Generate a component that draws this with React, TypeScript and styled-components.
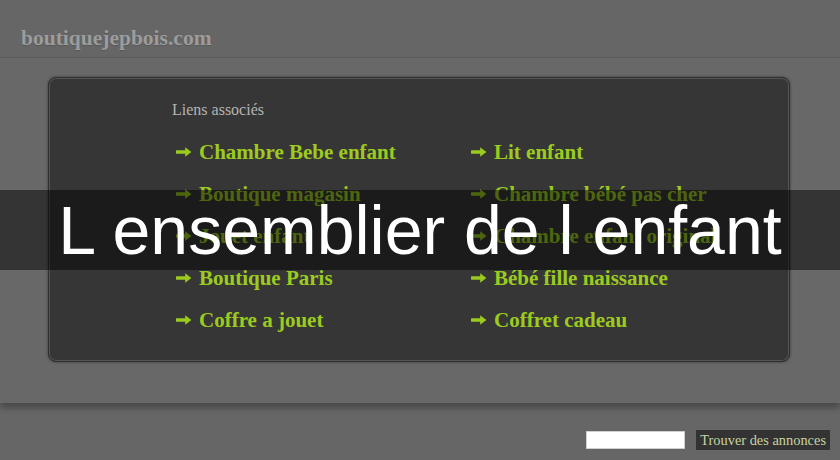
import React from "react";
import styled, { createGlobalStyle } from "styled-components";

const links: string[][] = [
  ["Chambre Bebe enfant", "Lit enfant"],
  ["Boutique magasin", "Chambre bébé pas cher"],
  ["Jouet enfant", "Chambre enfant original"],
  ["Boutique Paris", "Bébé fille naissance"],
  ["Coffre a jouet", "Coffret cadeau"],
];

// grosse flèche verte devant chaque lien
const Arrow: React.FC = () => (
  <ArrowIcon viewBox="0 0 16 12" aria-hidden="true">
    <path d="M1 4.3h8.2V1.2L15.4 6l-6.2 4.8V7.7H1a1.7 1.7 0 0 1 0-3.4z" fill="currentColor" />
  </ArrowIcon>
);

const App: React.FC = () => {
  return (
    <Page>
      <GlobalStyle />
      <Header>
        <SiteTitle>boutiquejepbois.com</SiteTitle>
      </Header>
      <Section>
        <Panel>
          <PanelTitle>Liens associés</PanelTitle>
          <LinkGrid>
            {links.flat().map((label) => (
              <LinkItem key={label} href="#">
                <Arrow />
                {label}
              </LinkItem>
            ))}
          </LinkGrid>
        </Panel>
      </Section>
      <SearchBar>
        <SearchInput type="text" />
        <SearchButton>Trouver des annonces</SearchButton>
      </SearchBar>
      <Banner>L ensemblier de l enfant</Banner>
    </Page>
  );
};

export default App;

const GlobalStyle = createGlobalStyle`
  html, body {
    margin: 0;
    padding: 0;
    background: #666666;
  }
`;

const Page = styled.div`
  position: relative;
  width: 840px;
  height: 460px;
  overflow: hidden;
  background: #666666;
  font-family: "Liberation Serif", "Times New Roman", serif;
`;

const Header = styled.header`
  height: 57px;
  padding: 24px 0 0 21px;
  box-sizing: border-box;
`;

const SiteTitle = styled.div`
  font-size: 21.5px;
  line-height: 28px;
  font-weight: bold;
  color: #9c9c9c;
  text-shadow: 0 1px 1px rgba(0, 0, 0, 0.15);
`;

const Section = styled.section`
  border-top: 1px solid #5a5a5a;
  background: #686868;
  padding: 19px 50px 41px 48px;
  box-shadow: 0 5px 6px rgba(0, 0, 0, 0.28);
`;

const Panel = styled.div`
  height: 285px;
  box-sizing: border-box;
  background: #363636;
  border: 1px solid #2f2f2f;
  border-radius: 8px;
  box-shadow: inset 0 0 0 1px #555555, 0 0 3px rgba(0, 0, 0, 0.45);
  padding: 22px 0 0 127px;
`;

const PanelTitle = styled.div`
  font-size: 16px;
  line-height: 20px;
  color: #b4b4b4;
  margin-left: -4px;
  margin-bottom: 11px;
`;

const LinkGrid = styled.div`
  display: grid;
  grid-template-columns: 295px 295px;
  grid-auto-rows: 42px;
`;

const LinkItem = styled.a`
  display: flex;
  align-items: center;
  font-size: 21px;
  font-weight: bold;
  color: #9ccb1f;
  text-decoration: none;
  white-space: nowrap;
`;

const ArrowIcon = styled.svg`
  width: 16px;
  height: 12px;
  margin-right: 7px;
  flex-shrink: 0;
`;

const SearchBar = styled.div`
  display: flex;
  justify-content: flex-end;
  align-items: center;
  gap: 11px;
  margin-top: 27px;
  padding-right: 10px;
`;

const SearchInput = styled.input`
  width: 99px;
  height: 18px;
  box-sizing: border-box;
  border: 1px solid #cfcfcf;
  background: #ffffff;
  padding: 0;
`;

const SearchButton = styled.button`
  height: 20px;
  padding: 0 4px;
  border: none;
  background: #333333;
  color: #c9d2a0;
  font-family: "Liberation Serif", "Times New Roman", serif;
  font-size: 14.4px;
  line-height: 20px;
`;

const Banner = styled.div`
  position: absolute;
  top: 190px;
  left: 0;
  right: 0;
  height: 80px;
  background: rgba(0, 0, 0, 0.5);
  color: #ffffff;
  font-family: "Liberation Sans", Arial, sans-serif;
  font-size: 68px;
  line-height: 80px;
  text-align: center;
  white-space: nowrap;
`;
